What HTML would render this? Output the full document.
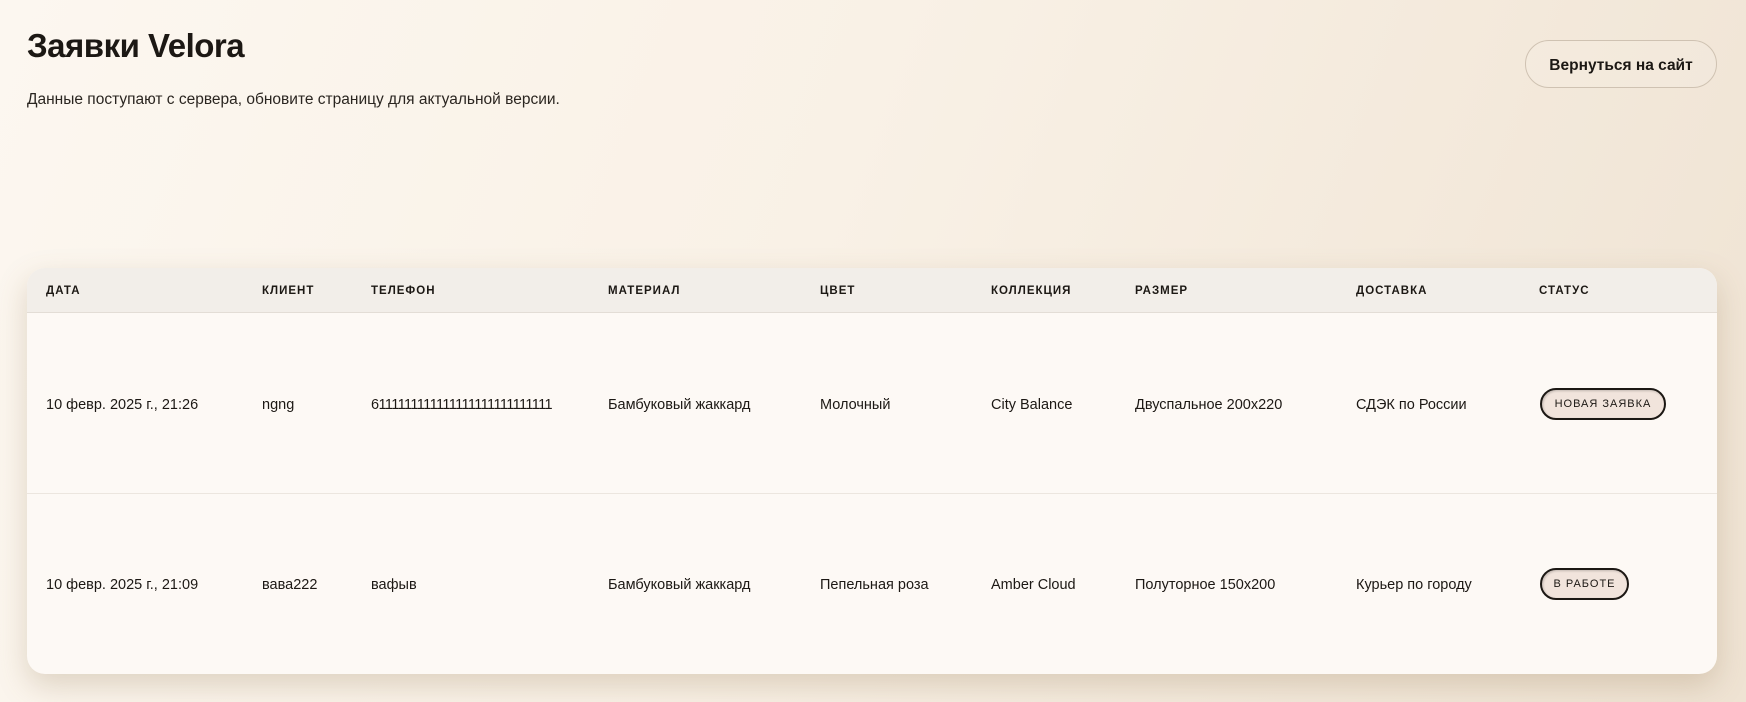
<!DOCTYPE html>
<html><head><meta charset="utf-8"><style>
*{margin:0;padding:0;box-sizing:border-box}
body{width:1746px;height:702px;overflow:hidden;font-family:"Liberation Sans",sans-serif;color:#1c1814;
background:linear-gradient(110deg,#fcf7f0 0%,#f9f1e6 45%,#efe3d3 100%);position:relative}
h1{position:absolute;left:27px;top:27px;font-size:33px;font-weight:700;letter-spacing:-0.5px}
.sub{position:absolute;left:27px;top:91px;font-size:15.5px;color:#2a2520}
.btn{position:absolute;left:1525px;top:40px;width:192px;height:48px;border:1px solid #cfc2b2;border-radius:24px;font-size:15.5px;font-weight:700;display:flex;align-items:center;justify-content:center;background:rgba(255,255,255,0.1);padding-top:3px}
.tbl{position:absolute;left:27px;top:268px;width:1690px;height:406px;background:#fdf9f5;border-radius:18px;overflow:hidden;box-shadow:0 12px 30px rgba(140,110,70,0.25)}
.hd{position:absolute;left:0;top:0;width:100%;height:45px;background:#f2eee9;border-bottom:1px solid #e3ddd6}
.r2{position:absolute;left:0;top:225px;width:100%;border-top:1px solid #ece6df}
.c{position:absolute;font-size:14.5px;white-space:nowrap;transform:translateY(-50%)}
.h{font-size:11.5px;font-weight:700;letter-spacing:1px}
.b{position:absolute;height:32px;border:2px solid #1c1814;border-radius:16px;background:#f1e4dc;font-size:11px;letter-spacing:1px;display:flex;align-items:center;justify-content:center;box-shadow:inset 1px 1px 2px rgba(0,0,0,.2)}
</style></head><body>
<h1>Заявки Velora</h1>
<div class="sub">Данные поступают с сервера, обновите страницу для актуальной версии.</div>
<div class="btn">Вернуться на сайт</div>
<div class="tbl">
<div class="hd"></div><div class="r2"></div>
<div class="c h" style="left:19px;top:23px">ДАТА</div>
<div class="c h" style="left:235px;top:23px">КЛИЕНТ</div>
<div class="c h" style="left:344px;top:23px">ТЕЛЕФОН</div>
<div class="c h" style="left:581px;top:23px">МАТЕРИАЛ</div>
<div class="c h" style="left:793px;top:23px">ЦВЕТ</div>
<div class="c h" style="left:964px;top:23px">КОЛЛЕКЦИЯ</div>
<div class="c h" style="left:1108px;top:23px">РАЗМЕР</div>
<div class="c h" style="left:1329px;top:23px">ДОСТАВКА</div>
<div class="c h" style="left:1512px;top:23px">СТАТУС</div>

<div class="c" style="left:19px;top:137px">10 февр. 2025 г., 21:26</div>
<div class="c" style="left:235px;top:137px">ngng</div>
<div class="c" style="left:344px;top:137px;letter-spacing:-0.6px">6111111111111111111111111111</div>
<div class="c" style="left:581px;top:137px">Бамбуковый жаккард</div>
<div class="c" style="left:793px;top:137px">Молочный</div>
<div class="c" style="left:964px;top:137px">City Balance</div>
<div class="c" style="left:1108px;top:137px">Двуспальное 200x220</div>
<div class="c" style="left:1329px;top:137px">СДЭК по России</div>
<div class="b" style="left:1513px;top:120px;width:126px">НОВАЯ ЗАЯВКА</div>

<div class="c" style="left:19px;top:317px">10 февр. 2025 г., 21:09</div>
<div class="c" style="left:235px;top:317px">вава222</div>
<div class="c" style="left:344px;top:317px">вафыв</div>
<div class="c" style="left:581px;top:317px">Бамбуковый жаккард</div>
<div class="c" style="left:793px;top:317px">Пепельная роза</div>
<div class="c" style="left:964px;top:317px">Amber Cloud</div>
<div class="c" style="left:1108px;top:317px">Полуторное 150x200</div>
<div class="c" style="left:1329px;top:317px">Курьер по городу</div>
<div class="b" style="left:1513px;top:300px;width:89px">В РАБОТЕ</div>
</div>
</body></html>
